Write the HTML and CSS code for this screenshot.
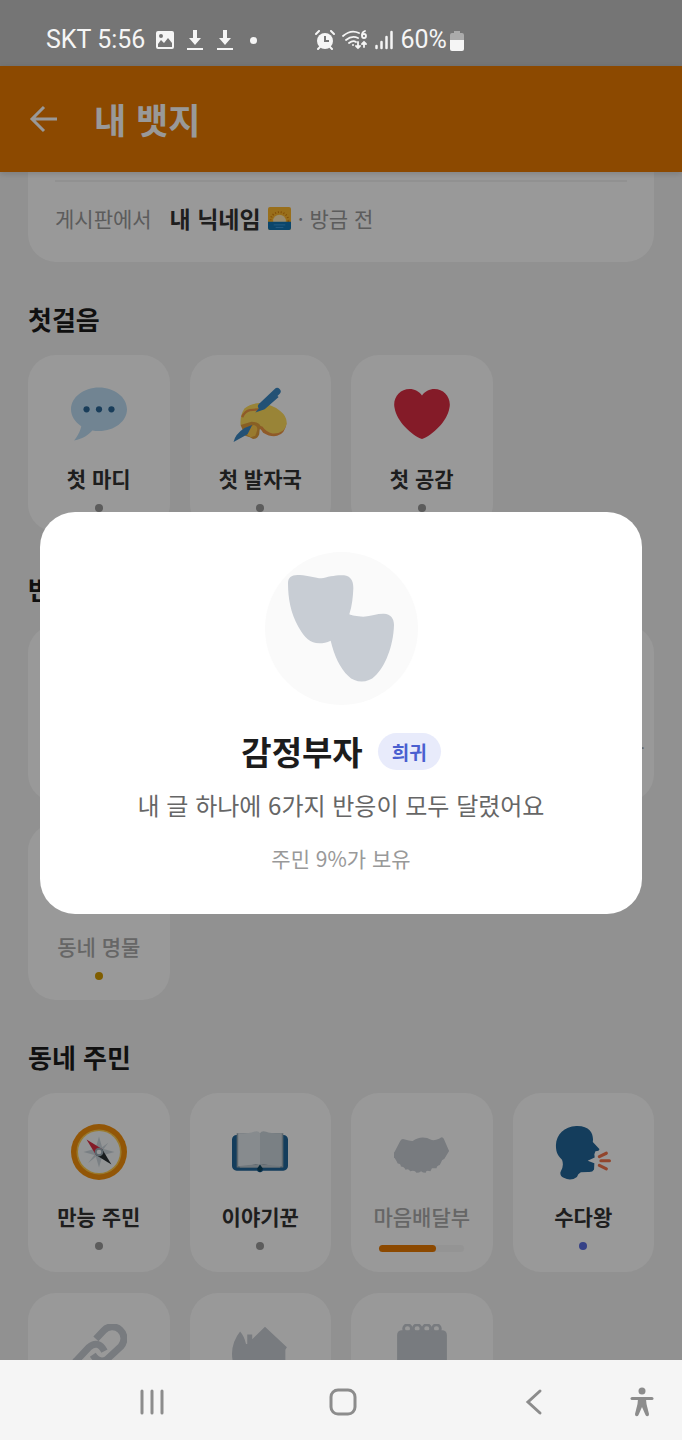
FILE: index.html
```
<!DOCTYPE html>
<html lang="ko">
<head>
<meta charset="UTF-8" />
<meta name="viewport" content="width=device-width, initial-scale=1" />
<title>내 뱃지</title>
<link rel="stylesheet" href="styles.css">
</head>
<body>

<div class="status-bar">
  <span>SKT 5:56</span>
  <div class="status-group">
    <svg width="18" height="18" viewBox="0 0 18 18"><path fill="#f5f5f5" fill-rule="evenodd" d="M2 0h14a2 2 0 0 1 2 2v14a2 2 0 0 1-2 2H2a2 2 0 0 1-2-2V2a2 2 0 0 1 2-2zM2 13v3h14v-4l-4-5-4 5-3-3zM5 3a2 2 0 1 0 0 4 2 2 0 0 0 0-4z"/></svg>
    <svg width="18" height="22" viewBox="0 0 18 22"><path fill="#f5f5f5" d="M7 1h4v8h4l-6 7-6-7h4zM1 19h16v2H1z"/></svg>
    <svg width="18" height="22" viewBox="0 0 18 22"><path fill="#f5f5f5" d="M7 1h4v8h4l-6 7-6-7h4zM1 19h16v2H1z"/></svg>
    <span class="status-dot"></span>
  </div>
  <div class="status-group system">
    <svg width="20" height="20" viewBox="0 0 20 20" fill="none" stroke="#f5f5f5" stroke-width="2" stroke-linecap="round"><circle cx="10" cy="11" r="8" fill="#f5f5f5" stroke="none"/><path d="M1 4l3-3M19 4l-3-3M5 17l-2 2M15 17l2 2"/><path stroke="#757575" d="M10 6v5h4" stroke-linecap="butt"/></svg>
    <svg width="26" height="20" viewBox="0 0 26 20" fill="none" stroke="#f5f5f5" stroke-width="1.800" stroke-linecap="round"><path d="M1 6Q9-1 17 3M4 10q6-5 12-2M7 13q4-3 7-1"/><circle cx="11" cy="15" r="1" fill="#f5f5f5" stroke="none"/><path d="M23 1q-3 1-3 4"/><circle cx="22" cy="6" r="2"/><path d="M16 12v6m-2-2l2 2 2-2M22 17v-5m-2 2l2-2 2 2"/></svg>
    <svg width="18" height="20" viewBox="0 0 18 20" fill="none" stroke="#f5f5f5" stroke-width="2.500" stroke-linecap="round"><path d="M1.500 16v2M6.500 12v6M11.500 7v11M16.500 2v16"/></svg>
    <span class="battery">60%
      <svg width="14" height="21" viewBox="0 0 14 21"><path fill="#ababab" d="M4 1h6v2h2a2 2 0 0 1 2 2v6H0V5a2 2 0 0 1 2-2h2z"/><path fill="#f5f5f5" d="M0 10h14v9a2 2 0 0 1-2 2H2a2 2 0 0 1-2-2z"/></svg>
    </span>
  </div>
</div>

<div class="app">
  <header class="app-header">
    <button class="back" aria-label="뒤로">
      <svg width="30" height="30" viewBox="0 0 30 30" fill="none" stroke="#fff" stroke-width="3"><path d="M29 15H4M16 3L4 15l12 12"/></svg>
    </button>
    <h1>내 뱃지</h1>
  </header>

  <main class="content">
    <div class="recent-card">
      <div class="recent-row">
        <span class="place">게시판에서</span>
        <strong>내 닉네임</strong>
        <svg width="23" height="23" viewBox="0 0 36 36"><rect width="36" height="36" rx="3" fill="#ffb92e"/><circle cx="18" cy="22" r="14" fill="none" stroke="#d87d0c" stroke-width="3" stroke-dasharray="1.500 3"/><circle cx="18" cy="22" r="10" fill="#ffe8b6"/><path fill="#1276b5" d="M0 23h36v10a3 3 0 0 1-3 3H3a3 3 0 0 1-3-3z"/><path stroke="#55acee" d="M9 28h18M12 32h12"/></svg>
        <span>· 방금 전</span>
      </div>
    </div>

    <section>
      <h2>첫걸음</h2>
      <div class="badges">
        <button class="badge">
          <svg class="icon" viewBox="0 0 36 36"><path fill="#bdddf4" d="M18 1C8.059 1 0 7.268 0 15c0 4.368 2.574 8.268 6.604 10.835C6.08 28.144 4.859 31.569 2 35c5.758-.96 9.439-3.761 11.716-6.416 1.376.262 2.805.416 4.284.416 9.941 0 18-6.268 18-14S27.941 1 18 1z"/><g fill="#2a6797"><circle cx="10" cy="15" r="2"/><circle cx="18" cy="15" r="2"/><circle cx="26" cy="15" r="2"/></g></svg>
          <span class="name">첫 마디</span>
          <span class="dot"></span>
        </button>
        <button class="badge">
          <svg class="icon" viewBox="0 0 36 36"><path fill="#ef9645" d="M16 26q3 2 4 4 5 3 9 2 5-1 6-8l-6-3z"/><path fill="#ffdc5d" d="M5.500 25Q5 19 8 14.500q4-3.500 10-3.500 8 1 13 5 5 4 4 9-2 6-9 5.500-4-1-6.500-4.500-3-1-6-.5z"/><path fill="#e39f3d" d="M5.500 25l7-2q5 0 6 3-1 2-1 5-1 3-4 3l-2-1-3-1z"/><path fill="#ffcc4d" d="M9 31q1-5 5-6 3 1 2 4l-1 3-3 1z"/><path stroke="#ef9645" stroke-width="1.500" fill="none" d="M6.500 20q2-4 5-4.500l6-.5"/><path stroke="#3b88c3" stroke-width="4.500" stroke-linecap="round" d="M29 3.500L19 13"/><path fill="#3b88c3" d="M21 15l-6 2 11-13 4 3zM8 27l5-2-3 6-9 5q1-5 7-9z"/></svg>
          <span class="name">첫 발자국</span>
          <span class="dot"></span>
        </button>
        <button class="badge">
          <svg class="icon" viewBox="0 0 36 36"><path fill="#dd2e44" d="M35.885 11.833c0-5.45-4.418-9.868-9.867-9.868-3.308 0-6.227 1.633-8.018 4.129-1.791-2.496-4.71-4.129-8.017-4.129-5.45 0-9.868 4.417-9.868 9.868 0 .772.098 1.52.266 2.241C1.751 22.587 11.216 31.568 18 34.034c6.783-2.466 16.249-11.447 17.617-19.959.17-.721.268-1.469.268-2.242z"/></svg>
          <span class="name">첫 공감</span>
          <span class="dot"></span>
        </button>
      </div>
    </section>

    <section>
      <h2>반응</h2>
      <div class="badges">
        <button class="badge locked">
          <svg class="icon" viewBox="0 0 36 36"><circle cx="18" cy="18" r="17"/></svg>
          <span class="name">첫 반응</span>
          <span class="dot"></span>
        </button>
        <button class="badge locked">
          <svg class="icon" viewBox="0 0 36 36"><circle cx="18" cy="18" r="17"/></svg>
          <span class="name">감정부자</span>
          <span class="dot rare"></span>
        </button>
        <button class="badge locked">
          <svg class="icon" viewBox="0 0 36 36"><circle cx="18" cy="18" r="17"/></svg>
          <span class="name">공감왕</span>
          <span class="dot rare"></span>
        </button>
        <button class="badge locked">
          <svg class="icon" viewBox="0 0 36 36"><circle cx="18" cy="18" r="17"/></svg>
          <span class="name">동네 인기스타</span>
          <span class="dot"></span>
        </button>
        <button class="badge locked">
          <svg class="icon" viewBox="0 0 36 36"><circle cx="18" cy="18" r="17"/></svg>
          <span class="name">동네 명물</span>
          <span class="dot legend"></span>
        </button>
      </div>
    </section>

    <section>
      <h2>동네 주민</h2>
      <div class="badges">
        <button class="badge">
          <svg class="icon" viewBox="0 0 36 36"><circle cx="18" cy="18" r="18" fill="#f4900c"/><circle cx="18" cy="18" r="14.5" fill="#ffcc4d"/><circle cx="18" cy="18" r="13.5" fill="#f5f8fa"/><path fill="#ccd6dd" d="M18 8l2 7 4-3-3 4 7 2-7 2 3 5-4-4-2 7-2-7-5 4 4-5-7-2 7-2-3-4 4 3z"/><path fill="#dd2e44" d="M10 10l10 6-4 4z"/><path fill="#292f33" d="M26 26l-10-6 4-4z"/><circle cx="18" cy="18" r="2.8" fill="#99aab5"/><circle cx="18" cy="18" r="1.5" fill="#f5f8fa"/></svg>
          <span class="name">만능 주민</span>
          <span class="dot"></span>
        </button>
        <button class="badge">
          <svg class="icon" viewBox="0 0 36 36"><path fill="#269" d="M3 7h30a3 3 0 0 1 3 3v17a3 3 0 0 1-3 3H20q-2 2-4 0H3a3 3 0 0 1-3-3V10a3 3 0 0 1 3-3z"/><path fill="#99aab5" d="M3 6h30v22H3z"/><path fill="#e1e8ed" d="M4 6q8 0 10-1 3-1 4 1v21q-2-2-4-1-5 2-10 1z"/><path fill="#ccd6dd" d="M18 6q1-2 4-1 2 1 10 1v21q-5 1-10-1-3-1-4 1z"/><path fill="#bcc8d0" d="M5 27q8-1 13-1 5 0 13 1v1H5z"/><path fill="#0a435f" d="M16 29l2-3 2 3-2 2z"/></svg>
          <span class="name">이야기꾼</span>
          <span class="dot"></span>
        </button>
        <button class="badge locked">
          <svg class="icon" viewBox="0 0 36 36"><path d="M.5 17.600L4 11q1-2 3-1 3 1 5 .9 3-2.300 6.500-2.300 3 0 5 1.400 2 1 5.500-.5 2-2 3 0l3.400 7.900-3 5q-2 1-2 2l-1 2q-2 .5-2 2l-3 0-1 2q-3-1-3 1-2 0-3-1-1 1-3 1-1-2-4-1-1-2-3-1-1-2-3-2 0-2-2-2-1-2-2-3.500-2-1-1.500-2z"/></svg>
          <span class="name">마음배달부</span>
          <span class="progress"><span class="bar" style="width: 67%"></span></span>
        </button>
        <button class="badge">
          <svg class="icon" viewBox="0 0 36 36"><path fill="#269" d="M13.700 1.300C23 1 25 7 24.300 11.500L28.500 16q.3 1.500-2.500 1.500l-.7 2 .2 2L21 23.600l4.300 1.600-.2 4q-1 2-4 1.600l-4.500.2q-2 1-2.500 3-4 3-8.500.5-2.500-1-2.100-3.500Q6 27 4.500 23C1 19.500.6 17 .6 13.500.8 7 6 1.500 13.700 1.300z"/><path fill="none" stroke="#f4744a" stroke-width="2" stroke-linecap="round" d="M28.500 21l4.500-2.200M29.500 23.600H35M28.500 26.600l4.500 2.200"/></svg>
          <span class="name">수다왕</span>
          <span class="dot rare"></span>
        </button>
        <button class="badge locked">
          <svg class="icon" viewBox="0 0 36 36"><g fill="none" stroke="#c8cdd4" stroke-width="4.500"><path d="M16 9.500L21 4.200A7.200 7.200 0 0 1 32 14.500L23 22.800q-5 3-9-3"/><path d="M21.500 17.500q-4-7.500-10-2.500L3.500 23.500a7 7 0 0 0 10 10l6-6"/></g></svg>
          <span class="name">이음이</span>
          <span class="dot"></span>
        </button>
        <button class="badge locked">
          <svg class="icon" viewBox="0 0 36 36"><path d="M5.200 4.800q2.800 3.200 3.800 8h.8V6.800H13v3L21.200 1.700 35.300 15l-1 1.600V33H4q-4-7-4-14Q.2 11 5.200 4.800z"/></svg>
          <span class="name">터줏대감</span>
          <span class="dot"></span>
        </button>
        <button class="badge locked">
          <svg class="icon" viewBox="0 0 36 36"><rect x="2" y="4" width="32" height="31" rx="3"/><g fill="none" stroke="#c8cdd4" stroke-width="1.800"><circle cx="8.700" cy="3" r="2.500"/><circle cx="14.900" cy="3" r="2.500"/><circle cx="21.100" cy="3" r="2.500"/><circle cx="27.300" cy="3" r="2.500"/></g></svg>
          <span class="name">개근상</span>
          <span class="dot"></span>
        </button>
      </div>
    </section>
  </main>

  <div class="scrim">
    <div class="dialog" role="dialog" aria-labelledby="dialog-title">
      <div class="medal">
        <svg width="106" height="107" viewBox="204 135 318 321"><path fill="#c8cdd4" d="M204 160c0-18 10-24 28-25C260 134 285 145 304 145C322 141 350 134 372 136C392 138 400 152 400 175C399 200 396 230 388 253C395 256 410 260 430 260C455 257 475 250 492 251C512 252 522 265 522 285C520 350 495 410 465 438C445 460 405 460 385 438C360 415 342 375 332 332C320 338 310 340 298 340C270 338 255 325 235 290C212 250 204 205 204 160Z"/></svg>
      </div>
      <div class="dialog-heading">
        <h2 id="dialog-title">감정부자</h2>
        <span class="tier">희귀</span>
      </div>
      <p class="description">내 글 하나에 6가지 반응이 모두 달렸어요</p>
      <p class="owners">주민 9%가 보유</p>
    </div>
  </div>
</div>

<nav class="nav-bar">
  <button aria-label="최근 앱"><svg width="28" height="28" viewBox="0 0 28 28"><path d="M4 3v22M14 3v22M24 3v22"/></svg></button>
  <button aria-label="홈"><svg width="28" height="28" viewBox="0 0 28 28"><rect x="2" y="2" width="24" height="24" rx="7"/></svg></button>
  <button aria-label="뒤로"><svg width="28" height="28" viewBox="0 0 28 28"><path d="M20 3L8 14l12 11"/></svg></button>
  <button class="accessibility" aria-label="접근성"><svg width="28" height="32" viewBox="0 0 28 32"><circle class="solid" cx="14" cy="5" r="3.500"/><path d="M4 12.500h20"/><path class="solid" d="M10 13h8l.5 5 2.500 10q.3 2-1.500 2.300-1.500 0-2-1.300L14 21l-3.500 8q-.5 1.300-2 1.300Q6.700 30 7 28l2.500-10z"/></svg></button>
</nav>

</body>
</html>
```
FILE: styles.css
```
* {
  box-sizing: border-box;
}
body {
  margin: 0;
  height: 100vh;
  display: flex;
  flex-direction: column;
  background: #f2f2f2;
  color: #1c1c1c;
  font-family: "Noto Sans CJK KR", sans-serif;
}
h1, h2, p {
  margin: 0;
}
button {
  border: none;
  padding: 0;
  background: none;
  color: inherit;
  font-family: inherit;
  cursor: pointer;
}
svg {
  flex-shrink: 0;
}

/* phone status bar */
.status-bar {
  flex: none;
  display: flex;
  align-items: center;
  height: 66px;
  padding: 14px 46px 0;
  background: #757575;
  color: #f5f5f5;
  font-family: Roboto, sans-serif;
  font-size: 25px;
  line-height: 32px;
  white-space: nowrap;
}
.status-group {
  display: flex;
  align-items: center;
  gap: 12px;
  margin-left: 11px;
}
.status-dot {
  width: 7px;
  height: 7px;
  margin-left: 4px;
  border-radius: 50%;
  background: #f5f5f5;
}
.status-group.system {
  gap: 7px;
  margin-left: 58px;
}
.battery {
  display: flex;
  align-items: center;
  gap: 3px;
}

/* app */
.app {
  position: relative;
  flex: 1;
  min-height: 0;
  display: flex;
  flex-direction: column;
}
.app-header {
  position: relative;
  flex: none;
  display: flex;
  align-items: center;
  gap: 36px;
  height: 106px;
  padding: 0 28px;
  background: #ea7a00;
  box-shadow: 0 2px 6px rgba(0, 0, 0, 0.15);
  color: #fff;
}
.back {
  display: flex;
}
.app-header h1 {
  font-size: 35px;
  line-height: 48px;
  font-weight: 700;
}
.content {
  flex: 1;
  min-height: 0;
  overflow: hidden;
  padding: 0 28px;
}
.recent-card {
  padding: 8px 27px 0;
  border-radius: 0 0 28px 28px;
  background: #fff;
}
.recent-row {
  display: flex;
  align-items: center;
  gap: 7px;
  padding: 20px 0 28px;
  border-top: 2px solid #f2f2f2;
  color: #999;
  font-size: 21px;
  line-height: 32px;
}
.recent-row .place {
  margin-right: 11px;
}
.recent-row strong {
  color: #333;
  font-size: 23px;
}
section {
  margin-top: 39px;
}
section h2 {
  margin-bottom: 18px;
  font-size: 26px;
  line-height: 36px;
}

.badges {
  display: grid;
  grid-template-columns: repeat(4, 1fr);
  gap: 21px 20px;
}
.badge {
  display: flex;
  flex-direction: column;
  align-items: center;
  min-width: 0;
  padding: 31px 0 20px;
  border-radius: 28px;
  background: #fff;
  color: #333;
}
.icon {
  width: 56px;
  height: 56px;
  fill: #c8cdd4;
}
.name {
  margin-top: 21px;
  font-size: 21px;
  line-height: 30px;
  font-weight: 700;
  white-space: nowrap;
}
.locked .name {
  color: #aaa;
  font-weight: 500;
}
.dot {
  width: 8px;
  height: 8px;
  margin-top: 11px;
  border-radius: 50%;
  background: #999;
}
.dot.rare {
  background: #5b6ee1;
}
.dot.legend {
  background: #d49b00;
}
.progress {
  width: 60%;
  height: 7px;
  margin-top: 14px;
  border-radius: 4px;
  background: #f7f7f7;
}
.bar {
  display: block;
  height: 100%;
  border-radius: 4px;
  background: #ea7a00;
}

/* badge detail */
.scrim {
  position: absolute;
  inset: 0;
  display: flex;
  align-items: center;
  justify-content: center;
  padding: 0 40px;
  background: rgba(0, 0, 0, 0.4);
}
.dialog {
  display: flex;
  flex-direction: column;
  align-items: center;
  width: 100%;
  padding: 40px 40px 41px;
  border-radius: 35px;
  background: #fff;
  text-align: center;
}
.medal {
  display: flex;
  align-items: center;
  justify-content: center;
  width: 153px;
  height: 153px;
  border-radius: 50%;
  background: #fafafa;
}
.dialog-heading {
  display: flex;
  align-items: center;
  gap: 15px;
  margin-top: 22px;
}
.dialog-heading h2 {
  font-size: 33px;
  line-height: 48px;
}
.tier {
  padding: 4px 14px;
  border-radius: 19px;
  background: #e8ebfb;
  color: #4a5fd0;
  font-size: 19px;
  line-height: 29px;
  font-weight: 700;
}
.description {
  margin-top: 12px;
  color: #666;
  font-size: 24px;
  line-height: 36px;
}
.owners {
  margin-top: 20px;
  color: #999;
  font-size: 21px;
  line-height: 30px;
}

/* system navigation */
.nav-bar {
  flex: none;
  display: grid;
  grid-template-columns: repeat(3, 1fr) 53px;
  align-items: center;
  justify-items: center;
  height: 80px;
  padding: 4px 0 0 57px;
  background: #f5f5f5;
}
.nav-bar button {
  display: flex;
}
.nav-bar svg {
  fill: none;
  stroke: #8c8c8c;
  stroke-width: 3;
  stroke-linecap: round;
}
.nav-bar .solid {
  fill: #8c8c8c;
  stroke: none;
}
.nav-bar .accessibility {
  justify-self: end;
  margin-right: 26px;
}
```
